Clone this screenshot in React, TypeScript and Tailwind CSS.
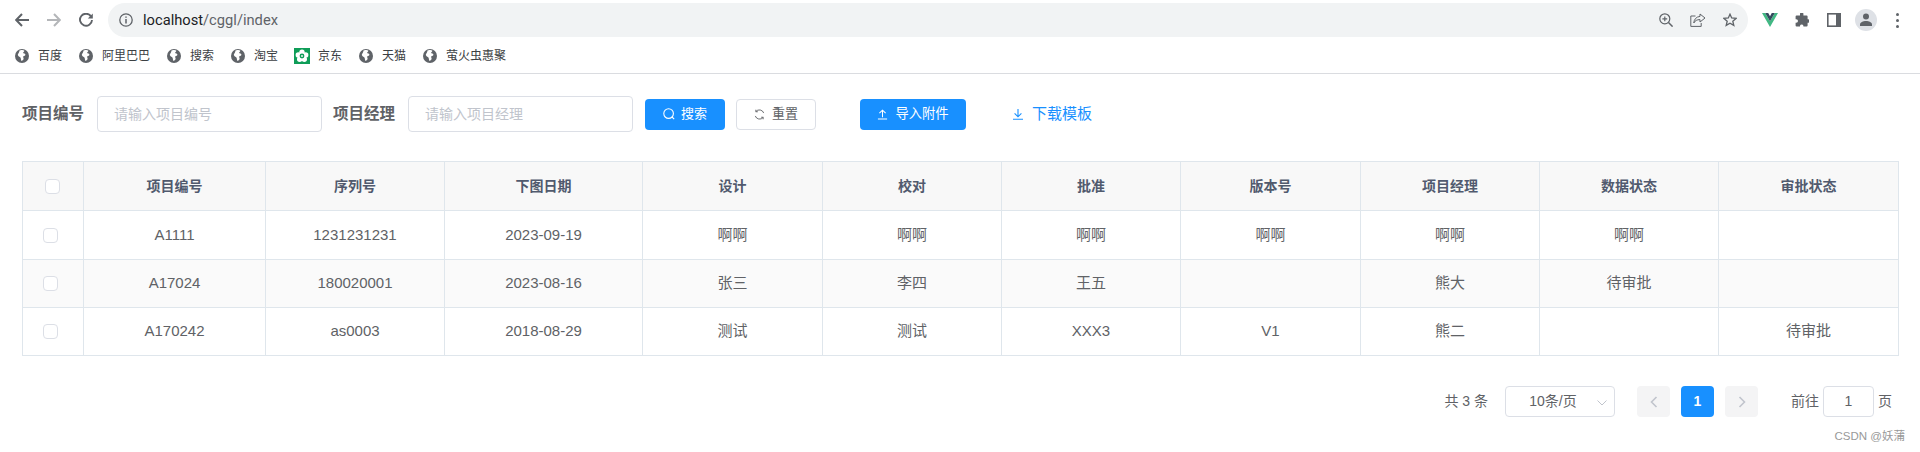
import React from "react";

const Globe = () => (
  <svg viewBox="0 0 14 14" className="w-[14px] h-[14px] shrink-0">
    <circle cx="7" cy="7" r="7" fill="#5f6368" />
    <path d="M4.800 1.600c2-.8 3.800-.6 4.600.2-.4 1-1.200 1.400-1.400 2.200.6.600 2 .4 2.400 1.400.2 1.200-1.400 1.600-2.400 2 .2 1 1 1.800.4 3-.6.800-1.400 1.400-2.200 1.400-.4-1.400-.2-2.800-1-3.600-1.200-.4-2.200-1.200-2.400-2.400.4-1.400 1.800-2.200 1.600-4.200z" fill="#fff" />
  </svg>
);

const JdIcon = () => (
  <svg viewBox="0 0 16 16" className="w-4 h-4 shrink-0">
    <rect width="16" height="16" fill="#0f9d58" />
    <g fill="#fff">
      <circle cx="8" cy="4.300" r="2.700" />
      <circle cx="11.700" cy="7" r="2.700" />
      <circle cx="10.300" cy="11.300" r="2.700" />
      <circle cx="5.700" cy="11.300" r="2.700" />
      <circle cx="4.300" cy="7" r="2.700" />
    </g>
    <circle cx="8" cy="8" r="2.400" fill="#0f9d58" />
    <circle cx="8" cy="8" r="0.900" fill="#fff" />
  </svg>
);

const Bookmark = ({ label, jd }: { label: string; jd?: boolean }) => (
  <div className={jd ? "flex items-center gap-2 -ml-px text-[12px] leading-none text-[#3c4043]" : "flex items-center gap-[9px] text-[12px] leading-none text-[#3c4043]"}>
    {jd ? <JdIcon /> : <Globe />}
    <span>{label}</span>
  </div>
);

const ChromeBar = () => (
  <div className="h-[74px] pt-[3px] border-b border-[#dadce0] bg-white">
    <div className="flex items-center h-[34px]">
      <svg viewBox="0 0 14 14" className="w-[14px] h-[14px] ml-[15px] shrink-0" fill="none" stroke="#5f6368" strokeWidth="2">
        <path d="M14 7H1.500M7 1 1.200 7 7 13" />
      </svg>
      <svg viewBox="0 0 14 14" className="w-[14px] h-[14px] ml-[18px] shrink-0" fill="none" stroke="#b4b6b9" strokeWidth="2">
        <path d="M0 7h12.500M7 1l5.800 6L7 13" />
      </svg>
      <svg viewBox="0 0 14 14" className="w-[14px] h-[14px] ml-[18px] shrink-0" fill="none" stroke="#5f6368" strokeWidth="1.900">
        <path d="M12 3.400A6 6 0 1 0 13 7" />
        <path d="M13.800.4v5H8.800z" fill="#5f6368" stroke="none" />
      </svg>
      <div className="flex items-center h-[34px] w-[1640px] ml-[15px] rounded-full bg-[#f1f3f4]">
        <svg viewBox="0 0 14 14" className="w-[14px] h-[14px] ml-[11px] shrink-0" fill="none" stroke="#5f6368" strokeWidth="1.300">
          <circle cx="7" cy="7" r="6.200" />
          <path d="M7 6v4.400M7 3.400v1.400" strokeWidth="1.500" />
        </svg>
        <div className="ml-[10px] text-[14.7px] text-[#5f6368] font-['Roboto',sans-serif]">
          <span className="text-[#202124]">localhost</span>/cggl/index
        </div>
        <div className="flex-1" />
        <svg viewBox="0 0 14 14" className="w-[14px] h-[14px] shrink-0" fill="none" stroke="#5f6368" strokeWidth="1.200">
          <circle cx="5.800" cy="5.800" r="5" />
          <path d="M9.500 9.500 13.600 13.600" strokeWidth="1.500" />
          <path d="M5.800 3.400v4.800M3.400 5.800h4.800" />
        </svg>
        <svg viewBox="0 0 16 14" className="w-4 h-[14px] ml-[17px] shrink-0" fill="none" stroke="#5f6368" strokeWidth="1">
          <path d="M5.500 3H.8v10.400h10.400V10" />
          <path d="M10 1l5 4-5 4V6.600C7 6.600 5 7.600 3.800 10 4 6.600 6 3.800 10 3.400z" />
        </svg>
        <svg viewBox="0 0 14 14" className="w-[14px] h-[14px] ml-[17px] mr-[11px] shrink-0" fill="none" stroke="#5f6368" strokeWidth="1.300">
          <path d="M7 1.200 8.700 5l4.300.4-3.200 2.800 1 4.200L7 10.200l-3.800 2.200 1-4.200L1 5.400 5.300 5z" />
        </svg>
      </div>
      <svg viewBox="0 0 16 14" className="w-4 h-[14px] ml-[14px] shrink-0">
        <path d="M0 0h3.200L8 8.200 12.800 0H16L8 14z" fill="#41b883" />
        <path d="M3.200 0h3L8 3.200 9.800 0h3L8 8.200z" fill="#34495e" />
      </svg>
      <svg viewBox="0 0 14 14" className="w-[14px] h-[14px] ml-[17px] shrink-0" fill="#5f6368">
        <path d="M5 .6a1.800 1.800 0 0 1 3.400 0V2.600h3.200a1 1 0 0 1 1 1v2.600h.4a1.800 1.800 0 0 1 0 3.600h-.4v2.800a1 1 0 0 1-1 1H8.400v-.8a1.800 1.800 0 0 0-3.400 0v.8H1.600a1 1 0 0 1-1-1V9.800h.6a1.800 1.800 0 0 0 0-3.600H.6V3.600a1 1 0 0 1 1-1H5z" />
      </svg>
      <svg viewBox="0 0 14 14" className="w-[14px] h-[14px] ml-[18px] shrink-0">
        <path d="M0 0h14v14H0z" fill="#5f6368" />
        <path d="M1.600 1.600h7.400v10.800H1.600z" fill="#fff" />
      </svg>
      <div className="flex items-center justify-center w-[22px] h-[22px] ml-[14px] rounded-full bg-[#dee1e6] shrink-0">
        <svg viewBox="0 0 14 14" className="w-[14px] h-[14px]" fill="#5f6368">
          <circle cx="7" cy="3.600" r="3" />
          <path d="M1 13v-1.600C1 9.400 4 8 7 8s6 1.400 6 3.400V13z" />
        </svg>
      </div>
      <div className="flex flex-col gap-[3px] ml-[19px] shrink-0">
        <span className="w-[3px] h-[3px] rounded-full bg-[#5f6368]" />
        <span className="w-[3px] h-[3px] rounded-full bg-[#5f6368]" />
        <span className="w-[3px] h-[3px] rounded-full bg-[#5f6368]" />
      </div>
    </div>
    <div className="flex items-center h-[32px] pl-[15px] mt-[3px] gap-[17px]">
      <Bookmark label="百度" />
      <Bookmark label="阿里巴巴" />
      <Bookmark label="搜索" />
      <Bookmark label="淘宝" />
      <Bookmark label="京东" jd />
      <Bookmark label="天猫" />
      <Bookmark label="萤火虫惠聚" />
    </div>
  </div>
);

const Filters = () => (
  <div className="flex items-center h-[36px] mt-[22px] pl-[22px] text-[14px]">
    <label className="w-[61px] text-[15.500px] font-bold whitespace-nowrap text-[#606266]">项目编号</label>
    <input placeholder="请输入项目编号" className="w-[225px] h-[36px] ml-[14px] px-4 border border-[#dcdfe6] rounded outline-none placeholder:text-[#c0c4cc]" />
    <label className="w-[62px] ml-[11px] text-[15.500px] font-bold whitespace-nowrap text-[#606266]">项目经理</label>
    <input placeholder="请输入项目经理" className="w-[225px] h-[36px] ml-[13px] px-4 border border-[#dcdfe6] rounded outline-none placeholder:text-[#c0c4cc]" />
    <button className="flex items-center justify-center gap-[6px] w-[80px] h-[31px] ml-[12px] rounded bg-[#1890ff] text-[13px] text-white">
      <svg viewBox="0 0 12 12" className="w-[12px] h-[12px]" fill="none" stroke="#fff" strokeWidth="1.100">
        <circle cx="5.600" cy="5.600" r="4.800" />
        <path d="M9 9l2.200 2.200" />
      </svg>
      搜索
    </button>
    <button className="flex items-center justify-center gap-[7px] w-[80px] h-[31px] ml-[11px] rounded border border-[#dcdfe6] bg-white text-[13px] text-[#606266]">
      <svg viewBox="0 0 12 12" className="w-[11px] h-[11px]" fill="none" stroke="#606266" strokeWidth="1">
        <path d="M10.600 4.400A5 5 0 0 0 2 2.800M1.400 7.600A5 5 0 0 0 10 9.200" />
        <path d="M2 .8v2.200h2.200M10 11.200V9h-2.200" />
      </svg>
      重置
    </button>
    <button className="flex items-center justify-center gap-[7px] w-[106px] h-[31px] ml-[44px] rounded bg-[#1890ff] text-[13.300px] text-white">
      <svg viewBox="0 0 12 12" className="w-[11px] h-[11px]" fill="none" stroke="#fff" strokeWidth="1.100">
        <path d="M6 9V1.200M2.600 4.600 6 1.200l3.400 3.400M1 11h10" />
      </svg>
      导入附件
    </button>
    <a className="flex items-center gap-2 ml-[46px] text-[15px] text-[#1890ff]">
      <svg viewBox="0 0 12 12" className="w-[12px] h-[12px]" fill="none" stroke="#1890ff" strokeWidth="1.100">
        <path d="M6 1v7.800M2.600 5.400 6 8.800l3.400-3.400M1 11.200h10" />
      </svg>
      下载模板
    </a>
  </div>
);

const columns = ["项目编号", "序列号", "下图日期", "设计", "校对", "批准", "版本号", "项目经理", "数据状态", "审批状态"];

const rows = [
  ["A1111", "1231231231", "2023-09-19", "啊啊", "啊啊", "啊啊", "啊啊", "啊啊", "啊啊", ""],
  ["A17024", "180020001", "2023-08-16", "张三", "李四", "王五", "", "熊大", "待审批", ""],
  ["A170242", "as0003", "2018-08-29", "测试", "测试", "XXX3", "V1", "熊二", "", "待审批"],
];

const rowHeights = ["h-[49px] bg-white", "h-[48px] bg-[#fafafa]", "h-[48px] bg-white"];

const Checkbox = ({ className }: { className: string }) => (
  <span className={`block w-[15px] h-[15px] rounded-sm border border-[#dcdfe6] bg-white ${className}`} />
);

const DataTable = () => (
  <div className="mt-[29px] ml-[22px] w-[1876px]">
    <table className="w-full table-fixed border-collapse text-[15px] text-center text-[#606266]">
      <colgroup>
        <col className="w-[61px]" />
        <col className="w-[182px]" />
        <col className="w-[179px]" />
        <col className="w-[198px]" />
        <col className="w-[180px]" />
        <col className="w-[179px]" />
        <col className="w-[179px]" />
        <col className="w-[180px]" />
        <col className="w-[179px]" />
        <col className="w-[179px]" />
        <col className="w-[180px]" />
      </colgroup>
      <thead>
        <tr className="h-[49px] bg-[#f8f8f8]">
          <th className="border border-[#dfe6ec]">
            <Checkbox className="ml-[22px]" />
          </th>
          {columns.map((c) => (
            <th key={c} className="border border-[#dfe6ec] text-[14px] font-bold text-[#515a6e]">
              {c}
            </th>
          ))}
        </tr>
      </thead>
      <tbody>
        {rows.map((row, i) => (
          <tr key={row[0]} className={rowHeights[i]}>
            <td className="border border-[#dfe6ec]">
              <Checkbox className="ml-[20px]" />
            </td>
            {row.map((cell, j) => (
              <td key={j} className="border border-[#dfe6ec]">
                {cell}
              </td>
            ))}
          </tr>
        ))}
      </tbody>
    </table>
  </div>
);

const Pagination = () => (
  <div className="flex items-center justify-end h-[31px] mt-[30px] pr-[28px] text-[14px] text-[#606266]">
    <span>共 3 条</span>
    <div className="relative flex items-center justify-center w-[110px] h-[31px] ml-[17px] pr-[14px] border border-[#dcdfe6] rounded">
      10条/页
      <svg viewBox="0 0 10 6" className="absolute right-[7px] top-[13px] w-[10px] h-[6px]" fill="none" stroke="#c0c4cc" strokeWidth="1">
        <path d="M.5.5 5 5 9.500.5" />
      </svg>
    </div>
    <div className="flex items-center justify-center w-[33px] h-[31px] ml-[22px] rounded-sm bg-[#f4f4f5]">
      <svg viewBox="0 0 8 12" className="w-[8px] h-[12px]" fill="none" stroke="#c0c4cc" strokeWidth="1.600">
        <path d="M6.500 1 1.500 6l5 5" />
      </svg>
    </div>
    <div className="flex items-center justify-center w-[33px] h-[31px] ml-[11px] rounded-sm bg-[#1890ff] font-bold text-white">1</div>
    <div className="flex items-center justify-center w-[33px] h-[31px] ml-[11px] rounded-sm bg-[#f4f4f5]">
      <svg viewBox="0 0 8 12" className="w-[8px] h-[12px]" fill="none" stroke="#c0c4cc" strokeWidth="1.600">
        <path d="M1.500 1l5 5-5 5" />
      </svg>
    </div>
    <span className="ml-[33px]">前往</span>
    <div className="flex items-center justify-center w-[51px] h-[31px] ml-[4px] border border-[#dcdfe6] rounded">1</div>
    <span className="ml-[4px]">页</span>
  </div>
);

export default function App() {
  return (
    <div className="relative h-[452px] overflow-hidden bg-white font-['Liberation_Sans','Noto_Sans_CJK_SC',sans-serif]">
      <ChromeBar />
      <Filters />
      <DataTable />
      <Pagination />
      <span className="absolute right-[15px] bottom-[7px] text-[11.500px] text-[#999999]">CSDN @妖蒲</span>
    </div>
  );
}
